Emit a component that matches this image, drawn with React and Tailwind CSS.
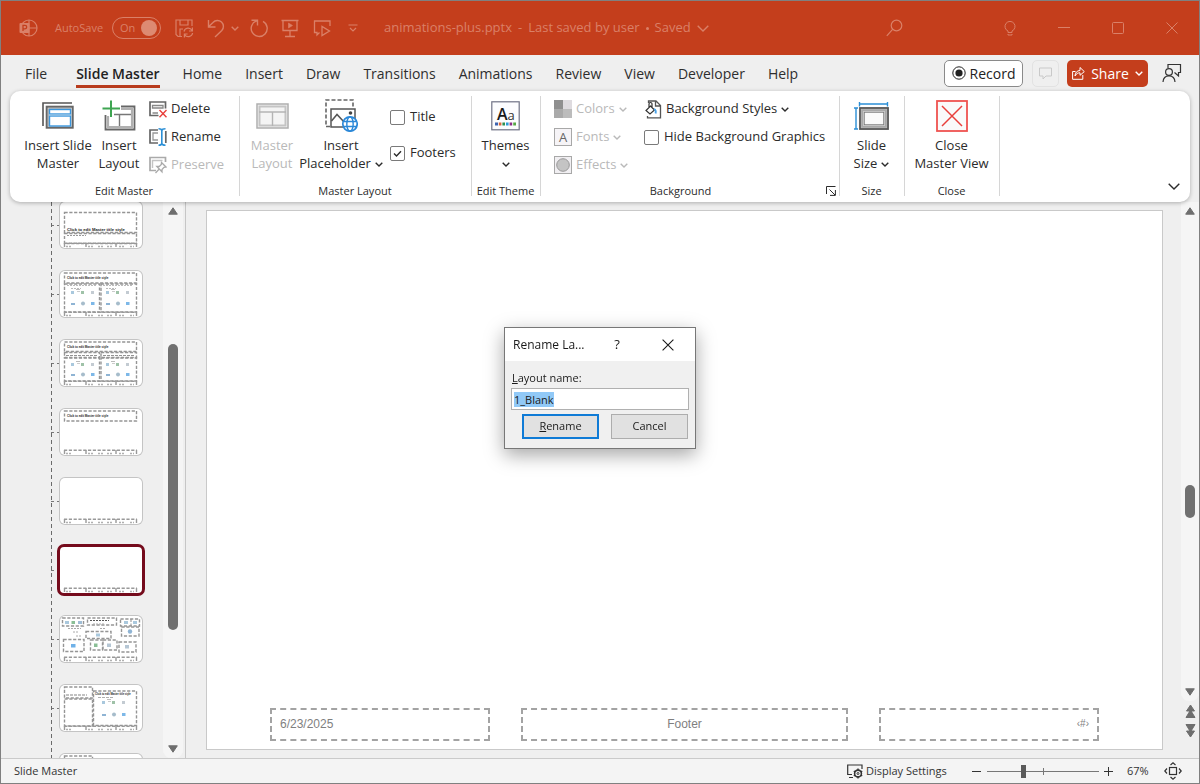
import React, { useEffect, useRef, useState } from "react";

const TABS = [
  "File",
  "Slide Master",
  "Home",
  "Insert",
  "Draw",
  "Transitions",
  "Animations",
  "Review",
  "View",
  "Developer",
  "Help"
];

function Svg({ w, h, className = "", children }) {
  return (
    <svg
      width={w}
      height={h}
      viewBox={`0 0 ${w} ${h}`}
      fill="none"
      stroke="currentColor"
      className={`shrink-0 ${className}`}
      aria-hidden="true"
    >
      {children}
    </svg>
  );
}

function Chevron({ w = 8, h = 5, className = "" }) {
  return (
    <Svg w={w} h={h} className={className}>
      <path d={`M0.7 0.7L${w / 2} ${h - 1}L${w - 0.7} 0.7`} strokeWidth="1.4" />
    </Svg>
  );
}

/* ---------- title bar ---------- */

function TitleBar() {
  return (
    <header className="flex h-[54px] shrink-0 items-center bg-[#c43e1c] pl-[18px] text-[#da8068]">
      <Svg w={19} h={20}>
        <circle cx="10" cy="10" r="8" strokeWidth="1.2" />
        <path d="M10 2V18M10 10H18" strokeWidth="1.2" />
        <rect x="0.5" y="5" width="10" height="10" rx="1" fill="currentColor" stroke="none" />
        <path d="M4 13V7.4H6A1.7 1.7 0 0 1 6 10.8H4" stroke="#c43e1c" strokeWidth="1.3" />
      </Svg>
      <label htmlFor="autosave" className="ml-[17px] w-[57px] text-[11px]">AutoSave</label>
      <button
        id="autosave"
        role="switch"
        aria-checked="true"
        className="flex h-[22px] w-[49px] items-center justify-between rounded-full border border-[#da8068] pr-[3px] pl-[7px] text-[11px]"
      >
        On
        <span className="size-4 rounded-full bg-[#dd8a72]" />
      </button>
      <button aria-label="Save" className="ml-[14px]">
        <Svg w={19} h={19}>
          <path d="M7 17.5H3L1 15.5V1H17V7M5 1V6H13V1M5 17V10H8" strokeWidth="1.2" />
          <path d="M9 12.5A4.3 4.3 0 0 1 17 11.5M17.4 8.5V12H14M17.6 14A4.3 4.3 0 0 1 9.6 15.5M9.4 18.4V15H12.6" strokeWidth="1.2" />
        </Svg>
      </button>
      <button aria-label="Undo" className="ml-[13px]">
        <Svg w={18} h={19}>
          <path d="M1.5 1V8H8.5M1.8 7.6L6 3.4A6 6 0 0 1 14.8 11.6L8 18" strokeWidth="1.4" />
        </Svg>
      </button>
      <button aria-label="Undo history" className="ml-[6px]">
        <Chevron w={8} h={5} />
      </button>
      <button aria-label="Redo" className="ml-[10px]">
        <Svg w={20} h={19}>
          <path d="M8.5 6.5V1.2H2.5M7.8 1.8A8 8 0 1 0 14 2.4" strokeWidth="1.4" />
        </Svg>
      </button>
      <button aria-label="Start from beginning" className="ml-3">
        <Svg w={18} h={19}>
          <path d="M0.5 1.5H17.5M2 1.5V11.5H16V1.5M9 11.5V17.5M4 17.5H14" strokeWidth="1.3" />
          <path d="M7.5 4L11.5 6.5L7.5 9Z" fill="currentColor" strokeWidth="0.6" />
        </Svg>
      </button>
      <button aria-label="Comment" className="ml-[14px]">
        <Svg w={19} h={19}>
          <path d="M6.5 13.5L4 16V13.5H1.5V2H17V7" strokeWidth="1.3" />
          <path d="M9 7.5V16.5L16.5 12Z" strokeWidth="1.3" />
        </Svg>
      </button>
      <button aria-label="Customize toolbar" className="ml-4">
        <Svg w={10} h={9}>
          <path d="M0.5 1H9.5M2 4L5 7L8 4" strokeWidth="1.2" />
        </Svg>
      </button>
      <button className="ml-[26px] flex items-center gap-[6px] text-[13px] whitespace-nowrap">
        <span>animations-plus.pptx</span>
        <span>-</span>
        <span>Last saved by user</span>
        <span className="size-[3px] rounded-full bg-[#da8068]" />
        <span>Saved</span>
        <Chevron w={12} h={7} />
      </button>

      <button aria-label="Search" className="mr-20 ml-auto">
        <Svg w={17} h={18}>
          <circle cx="10.5" cy="6.5" r="5.3" strokeWidth="1.2" />
          <path d="M6.6 10.4L0.8 16.8" strokeWidth="1.2" />
        </Svg>
      </button>
      <button aria-label="Tips" className="flex w-[54px] justify-center">
        <Svg w={12} h={17}>
          <path d="M4 12.5V11A5 5 0 1 1 8 11V12.5ZM4 14V15H8V14" strokeWidth="1" />
        </Svg>
      </button>
      <button aria-label="Minimize" className="flex w-[54px] justify-center">
        <Svg w={12} h={12}>
          <path d="M0 5.5H12" />
        </Svg>
      </button>
      <button aria-label="Maximize" className="flex w-[54px] justify-center">
        <Svg w={12} h={12}>
          <rect x="0.5" y="0.5" width="11" height="11" rx="1" />
        </Svg>
      </button>
      <button aria-label="Close" className="flex w-[54px] justify-center">
        <Svg w={12} h={12}>
          <path d="M0.5 0.5L11.5 11.5M11.5 0.5L0.5 11.5" />
        </Svg>
      </button>
    </header>
  );
}

/* ---------- tabs ---------- */

function TabRow({ active, onChange }) {
  return (
    <div className="flex h-9 shrink-0 items-center">
      <nav className="flex gap-[23px] pl-6 text-[14px] whitespace-nowrap">
        {TABS.map((tab) => (
          <button
            key={tab}
            onClick={() => onChange(tab)}
            className={
              tab === active
                ? "ml-[6px] h-[30px] border-b-[3px] border-[#b83b1d] pt-[3px] font-semibold text-[#222]"
                : "h-[30px] border-b-[3px] border-transparent pt-[3px] text-[#2e2e2e]"
            }
          >
            {tab}
          </button>
        ))}
      </nav>
      <div className="ml-auto flex items-center pr-[17px] text-[14px]">
        <button className="flex h-[27px] w-[79px] items-center justify-center gap-1 rounded-[5px] border border-[#8a8a8a] bg-white text-[#222]">
          <Svg w={14} h={14}>
            <circle cx="7" cy="7" r="6.2" />
            <circle cx="7" cy="7" r="3.6" fill="currentColor" stroke="none" />
          </Svg>
          Record
        </button>
        <button
          aria-label="Comments"
          className="ml-[9px] flex h-[27px] w-[27px] items-center justify-center rounded-[5px] border border-[#e2e2e2] text-[#c9c9c9]"
        >
          <Svg w={13} h={13}>
            <path d="M0.5 1H12.5V9H7L4 12V9H0.5Z" />
          </Svg>
        </button>
        <button className="ml-2 flex h-[27px] w-[81px] items-center justify-center gap-[6px] rounded-[5px] bg-[#c43e1c] text-white">
          <Svg w={13} h={14}>
            <path d="M3.5 5.5H0.6V13.3H10.8V9" />
            <path d="M3 10C3.2 6.5 5 4.6 8 4.5V1.5L12.3 5.6L8 9.3V6.8C5.8 6.8 4.4 7.6 3 10Z" />
          </Svg>
          Share
          <Chevron w={8} h={5} />
        </button>
        <button aria-label="Presence" className="ml-[14px] text-[#333]">
          <Svg w={20} h={20}>
            <path d="M6 5V1.5H18.5V9.5H16.5V13L12.5 9.5" strokeWidth="1.2" />
            <circle cx="7" cy="9" r="3.4" strokeWidth="1.2" />
            <path d="M1 19C1.2 15 3.5 12.8 7 12.8S12.8 15 13 19" strokeWidth="1.2" />
          </Svg>
        </button>
      </div>
    </div>
  );
}

/* ---------- ribbon ---------- */

function Group({ label, className = "", corner, children }) {
  return (
    <section className={`relative flex shrink-0 flex-col pr-[2px] ${className}`}>
      <div className="flex flex-1 pt-[3px]">{children}</div>
      <div className={`h-[21px] text-center text-[11px] leading-5 whitespace-nowrap ${corner ? "pr-[18px]" : ""}`}>{label}</div>
      {corner}
      <span className="absolute top-[5px] right-0 bottom-[6px] w-px bg-[#d6d6d6]" />
    </section>
  );
}

function BigButton({ icon, lines, chevron, disabled, className = "" }) {
  return (
    <button
      disabled={disabled}
      className={`flex flex-col items-center gap-1 pt-[6px] text-[13px] leading-[18px] whitespace-nowrap disabled:text-[#b9b9b9] ${className}`}
    >
      <span className="flex h-8 items-center">{icon}</span>
      <span>
        {lines[0]}
        <br />
        {lines[1]}
        {chevron ? <Chevron className={lines[1] ? "ml-1 inline-block align-middle" : "inline-block align-middle"} /> : null}
      </span>
    </button>
  );
}

function SmallButton({ icon, label, chevron, disabled }) {
  return (
    <button disabled={disabled} className="flex h-7 items-center gap-1 text-[13px] whitespace-nowrap disabled:text-[#b9b9b9]">
      <span className="flex w-[18px] justify-center">{icon}</span>
      {label}
      {chevron ? <Chevron /> : null}
    </button>
  );
}

function CheckBox({ id, label, checked, onChange }) {
  return (
    <div className="flex h-7 items-center gap-[5px] text-[13px] whitespace-nowrap">
      <span className="relative flex size-[15px]">
        <input
          id={id}
          type="checkbox"
          checked={checked}
          onChange={(e) => onChange(e.target.checked)}
          className="peer size-[15px] appearance-none rounded-[2px] border border-[#7a7a7a] bg-white"
        />
        <Svg w={15} h={15} className="pointer-events-none absolute inset-0 hidden peer-checked:block">
          <path d="M4 7.5L6.5 10L11 5.2" strokeWidth="1.4" />
        </Svg>
      </span>
      <label htmlFor={id}>{label}</label>
    </div>
  );
}

const InsertMasterIcon = (
  <Svg w={32} h={28}>
    <path d="M1 24V1H30" stroke="#555" strokeWidth="1.6" />
    <rect x="4.7" y="4.7" width="26" height="21" fill="#f5f5f5" stroke="#666" strokeWidth="2" />
    <rect x="6.7" y="6.7" width="22" height="17" stroke="#aaa" />
    <rect x="7.5" y="7.5" width="21" height="4.5" fill="#fff" stroke="#3a96dd" strokeWidth="1.4" />
    <rect x="7.5" y="14" width="21" height="10" fill="#fff" stroke="#3a96dd" strokeWidth="1.4" />
    <path d="M7 13H29" stroke="#83bbe5" strokeWidth="2" />
  </Svg>
);

const InsertLayoutIcon = (
  <Svg w={34} h={32}>
    <path d="M19 6.5H32.5V29.5H3.5V15" stroke="#666" strokeWidth="1.8" />
    <path d="M19 9H30V27H6V16" stroke="#b0b0b0" strokeWidth="2.2" />
    <path d="M12 14.5H29M17.5 14.5V26" stroke="#777" strokeWidth="1.4" />
    <path d="M9 0.5V17M0.5 8.5H18" stroke="#3fa552" strokeWidth="2" />
  </Svg>
);

const MasterLayoutIcon = (
  <Svg w={33} h={26}>
    <rect x="1" y="1" width="31" height="24" fill="#f4f4f4" stroke="#aeaeae" strokeWidth="1.5" />
    <rect x="3.5" y="3.5" width="26" height="19" stroke="#c4c4c4" strokeWidth="2" />
    <path d="M3 9H30M16.5 9V23" stroke="#b4b4b4" strokeWidth="1.4" />
  </Svg>
);

const PlaceholderIcon = (
  <Svg w={33} h={34}>
    <path d="M5 27.5H1V1H28V8" stroke="#666" strokeWidth="1.6" strokeDasharray="4 2" />
    <rect x="6" y="10" width="24" height="18" fill="#fff" stroke="#555" strokeWidth="1.5" />
    <path d="M6.5 22L12 15.5L20 24" stroke="#555" strokeWidth="1.5" />
    <circle cx="25.5" cy="14" r="1.8" fill="#444" stroke="none" />
    <circle cx="25" cy="25" r="7.2" fill="#fff" stroke="#2b88d8" strokeWidth="1.7" />
    <ellipse cx="25" cy="25" rx="3.2" ry="7.2" stroke="#2b88d8" strokeWidth="1.4" />
    <path d="M18.5 22.5H31.5M18.5 27.5H31.5" stroke="#2b88d8" strokeWidth="1.4" />
  </Svg>
);

const ThemesIcon = (
  <Svg w={29} h={30}>
    <rect x="0.8" y="0.8" width="27.4" height="28" fill="#fcfcfe" stroke="#6f7285" strokeWidth="1.2" />
    <text x="6" y="19" fontSize="16" fontFamily="Open Sans" fontWeight="600" fill="#1a1a1a" stroke="none">A</text>
    <text x="16.5" y="19" fontSize="13" fontFamily="Open Sans" fill="#333" stroke="none">a</text>
    <g strokeWidth="3">
      <path d="M4 23H7" stroke="#3c63b0" />
      <path d="M7.8 23H10.4" stroke="#d9643a" />
      <path d="M11.4 23H14" stroke="#2f8f4e" />
      <path d="M15 23H17.6" stroke="#2b9bd8" />
      <path d="M18.6 23H21.2" stroke="#8a2b86" />
      <path d="M22.2 23H25" stroke="#55a845" />
    </g>
  </Svg>
);

const SlideSizeIcon = (
  <Svg w={35} h={30}>
    <rect x="6" y="7" width="28" height="21" fill="#fafafa" stroke="#555" strokeWidth="1.8" />
    <rect x="8.2" y="9.2" width="23.6" height="16.6" stroke="#a8a8a8" strokeWidth="2.2" />
    <rect x="10.2" y="11.2" width="19.6" height="12.6" stroke="#777" />
    <path d="M5.5 3H33.5M5.5 1V5.5M33.5 1V5.5M2 7V28M0 7H4M0 28H4" stroke="#2b8fd6" strokeWidth="1.4" />
  </Svg>
);

const CloseMasterIcon = (
  <Svg w={32} h={32}>
    <rect x="1" y="1" width="30" height="30" fill="#fafafa" stroke="#ef5350" strokeWidth="1.8" />
    <path d="M6 6L26 26M26 6L6 26" stroke="#e8403c" strokeWidth="1.5" />
  </Svg>
);

const DeleteIcon = (
  <Svg w={18} h={17}>
    <path d="M9.5 14.5H1V1H16.5V7.5" stroke="#666" strokeWidth="1.7" />
    <path d="M3.5 4.5H14V7H3.5ZM3.5 12H9" stroke="#888" strokeWidth="1.3" />
    <path d="M10.5 9L17.5 16.3M17.5 9L10.5 16.3" stroke="#e8403c" strokeWidth="1.4" />
  </Svg>
);

const RenameIcon = (
  <Svg w={18} h={18}>
    <path d="M9 15H1V2H9M16.8 3V15" stroke="#666" strokeWidth="1.7" />
    <path d="M9 12H4V5H9" stroke="#999" strokeWidth="1.3" />
    <path d="M9.5 0.8Q12.5 0.8 12.8 2.5Q13.1 0.8 16.5 0.8M12.8 2.5V15.5M9.5 17.2Q12.5 17.2 12.8 15.5Q13.1 17.2 16.5 17.2" stroke="#2b8fd6" strokeWidth="1.6" />
  </Svg>
);

const PreserveIcon = (
  <Svg w={18} h={18}>
    <path d="M7 14.5H1V1.5H16.5V6" stroke="#aaa" strokeWidth="1.7" />
    <path d="M3.5 12V4.5H13.5" stroke="#c4c4c4" strokeWidth="1.4" />
    <path d="M12.5 6.5L17 11L15 11.3L13 13.5V15.8L7.8 10.5H10.2L12.3 8.5ZM10 13.2L6.5 17" stroke="#aaa" strokeWidth="1.3" />
  </Svg>
);

const ColorsIcon = (
  <Svg w={18} h={18}>
    <g stroke="none">
      <rect width="9" height="9" fill="#8f8f8f" />
      <rect x="9" width="9" height="9" fill="#dedbdf" />
      <rect y="9" width="9" height="9" fill="#aaa" />
      <rect x="9" y="9" width="9" height="9" fill="#bcbcbc" />
    </g>
  </Svg>
);

const FontsIcon = (
  <Svg w={18} h={18}>
    <rect x="0.5" y="0.5" width="17" height="17" fill="#f6f4f7" stroke="#a8a8a8" />
    <text x="9" y="14" textAnchor="middle" fontSize="13" fontFamily="Open Sans" fill="#666" stroke="none">A</text>
  </Svg>
);

const EffectsIcon = (
  <Svg w={18} h={18}>
    <rect x="0.5" y="0.5" width="17" height="17" fill="#f1eff2" stroke="#a8a8a8" />
    <circle cx="9" cy="9" r="6.3" fill="#c4c4c4" stroke="#999" />
  </Svg>
);

const BgStylesIcon = (
  <Svg w={17} h={19}>
    <path d="M3.5 3V1H11L15.5 5.5V17.8H2.5V16M10.5 1V6H15.3" stroke="#555" strokeWidth="1.3" />
    <path d="M5.5 6L9.5 10L5 14L1 10.5ZM4 7.5V4A1.5 1.5 0 0 1 7 4V8" stroke="#333" strokeWidth="1.2" />
    <path d="M9 9Q11.5 10 10.6 13.5" stroke="#4aa3e8" strokeWidth="1.8" />
  </Svg>
);

function Ribbon() {
  const [title, setTitle] = useState(false);
  const [footers, setFooters] = useState(true);
  const [hideBg, setHideBg] = useState(false);

  return (
    <div className="relative z-10 mx-[9px] flex h-[111px] shrink-0 rounded-[10px] bg-white text-[#2b2b2b] shadow-[0_1px_4px_rgba(0,0,0,0.28)]">
      <Group label="Edit Master" className="w-[230px]">
        <BigButton icon={InsertMasterIcon} lines={["Insert Slide", "Master"]} className="ml-[13px] w-[70px]" />
        <BigButton icon={InsertLayoutIcon} lines={["Insert", "Layout"]} className="ml-1 w-11" />
        <div className="ml-2 pt-px">
          <SmallButton icon={DeleteIcon} label="Delete" />
          <SmallButton icon={RenameIcon} label="Rename" />
          <SmallButton icon={PreserveIcon} label="Preserve" disabled />
        </div>
      </Group>

      <Group label="Master Layout" className="w-[232px]">
        <BigButton icon={MasterLayoutIcon} lines={["Master", "Layout"]} disabled className="ml-[10px] w-11" />
        <BigButton icon={PlaceholderIcon} lines={["Insert", "Placeholder"]} chevron className="ml-[5px] w-[84px]" />
        <div className="ml-[7px] flex flex-col gap-2 pt-[9px]">
          <CheckBox id="show-title" label="Title" checked={title} onChange={setTitle} />
          <CheckBox id="show-footers" label="Footers" checked={footers} onChange={setFooters} />
        </div>
      </Group>

      <Group label="Edit Theme" className="w-[69px]">
        <BigButton icon={ThemesIcon} lines={["Themes", ""]} chevron className="w-full" />
      </Group>

      <Group
        label="Background"
        className="w-[299px]"
        corner={
          <button aria-label="Background options" className="absolute right-1 bottom-[6px]">
            <Svg w={10} h={10}>
              <path d="M0.5 8V0.5H9.5M3.5 3.5L9 9M9.4 4V9.4H4" />
            </Svg>
          </button>
        }
      >
        <div className="ml-[13px] w-[90px] pt-px">
          <SmallButton icon={ColorsIcon} label="Colors" chevron disabled />
          <SmallButton icon={FontsIcon} label="Fonts" chevron disabled />
          <SmallButton icon={EffectsIcon} label="Effects" chevron disabled />
        </div>
        <div className="pt-px">
          <SmallButton icon={BgStylesIcon} label="Background Styles" chevron />
          <CheckBox id="hide-bg" label="Hide Background Graphics" checked={hideBg} onChange={setHideBg} />
        </div>
      </Group>

      <Group label="Size" className="w-[65px]">
        <BigButton icon={SlideSizeIcon} lines={["Slide", "Size"]} chevron className="w-full" />
      </Group>

      <Group label="Close" className="w-[95px]">
        <BigButton icon={CloseMasterIcon} lines={["Close", "Master View"]} className="w-full" />
      </Group>

      <button aria-label="Collapse ribbon" className="mr-[10px] mb-3 ml-auto self-end">
        <Chevron w={12} h={7} />
      </button>
    </div>
  );
}

/* ---------- thumbnails ---------- */

function Dash({ x, y, w, h }) {
  return <rect x={x} y={y} width={w} height={h} stroke="#959595" strokeWidth="1.4" strokeDasharray="3.2 1.6" />;
}

function FooterMarks() {
  return (
    <g stroke="#999" strokeWidth="1.4">
      <path d="M4 41.2H77" strokeDasharray="3.2 1.6" />
      <path d="M4.5 41V45M26 41V45M56 41V45M76.5 41V45" />
      <path d="M6 44.5H11M28 44.5H33M38 44.5H44M47 44.5H52M59 44.5H64M70 44.5H74" strokeDasharray="2 1" stroke="#b0b0b0" />
    </g>
  );
}

function TitleLine({ x = 7, y = 7.5, size = 3 }) {
  return (
    <text x={x} y={y} fontSize={size} fontFamily="Liberation Sans" fontWeight="600" fill="#222" stroke="none">
      Click to edit Master title style
    </text>
  );
}

// the six "insert content" glyphs that fill an empty content box
function ContentIcons({ x, y, rowGap = 11 }) {
  return (
    <g stroke="none">
      <rect x={x} y={y} width="3" height="3" fill="#a9c8dd" />
      <rect x={x + 5} y={y - 2} width="4" height="1" fill="#bbb" />
      <rect x={x + 6} y={y} width="3" height="1" fill="#ccc" />
      <rect x={x + 10} y={y} width="3" height="3" fill="#9fc2a8" />
      <rect x={x + 20} y={y} width="3" height="3" fill="#c3cbd2" />
      <rect x={x} y={y + rowGap + 1} width="4" height="2" fill="#8fb4d4" />
      <circle cx={x + 12} cy={y + rowGap + 1.5} r="2" fill="#a6bccb" />
      <rect x={x + 20} y={y + rowGap} width="3.5" height="3" fill="#7db8e8" />
    </g>
  );
}

const THUMBS = [
  {
    id: "section",
    art: (
      <>
        <Dash x={4.5} y={10.5} w={72} h={20} />
        <Dash x={4.5} y={31.5} w={72} h={10} />
        <TitleLine y={28.5} size={4.2} />
        <path d="M7 33.5H26" stroke="#999" strokeDasharray="2 1" />
      </>
    )
  },
  {
    id: "two-content",
    art: (
      <>
        <Dash x={4.5} y={2} w={72} h={10} />
        <Dash x={4.5} y={13} w={35} h={28} />
        <Dash x={41} y={13} w={35.5} h={28} />
        <TitleLine />
        <path d="M7 14.5H36M43 14.5H72M11 17.5H21M46 17.5H56" stroke="#aaa" strokeWidth="0.8" strokeDasharray="2 1" />
        <ContentIcons x={11} y={20} />
        <ContentIcons x={46} y={20} />
      </>
    )
  },
  {
    id: "comparison",
    art: (
      <>
        <Dash x={4.5} y={2} w={72} h={9.5} />
        <Dash x={4.5} y={12.5} w={35} h={5} />
        <Dash x={41} y={12.5} w={35.5} h={5} />
        <Dash x={4.5} y={18} w={35} h={23} />
        <Dash x={41} y={18} w={35.5} h={23} />
        <TitleLine />
        <path d="M6 15.5H37M43 15.5H75" stroke="#777" strokeWidth="0.8" strokeDasharray="3 1" />
        <ContentIcons x={11} y={23} rowGap={10} />
        <ContentIcons x={46} y={23} rowGap={10} />
      </>
    )
  },
  {
    id: "title-only",
    art: (
      <>
        <Dash x={4.5} y={2} w={72} h={10} />
        <TitleLine />
      </>
    )
  },
  { id: "blank", art: null },
  { id: "1-blank", art: null },
  {
    id: "custom",
    art: (
      <>
        <Dash x={2.5} y={2} w={21} h={8} />
        <Dash x={27.5} y={2} w={29} h={7} />
        <Dash x={60.5} y={3} w={19} h={7} />
        <path d="M71 3V10" stroke="#8f8f8f" strokeDasharray="3 1.5" />
        <Dash x={61.5} y={11} w={17.5} h={9} />
        <Dash x={26} y={15.5} w={25} h={7} />
        <Dash x={3.5} y={23.5} w={20.5} h={12} />
        <Dash x={30.5} y={24} w={12} h={10} />
        <Dash x={43} y={24} w={14} h={10} />
        <Dash x={59} y={26} w={17} h={10} />
        <path d="M30 4.5H49" stroke="#555" strokeDasharray="2 1" />
        <path d="M33 8H44M40 12.5H46M8 12.5H21M13 16H18M16 20H21" stroke="#aaa" strokeDasharray="2 1" />
        <g stroke="none">
          <rect x="5" y="5" width="4" height="3" fill="#a9c8dd" />
          <rect x="11.5" y="5" width="3.5" height="3" fill="#8abf96" />
          <rect x="18" y="5" width="4" height="3" fill="#9fbdd6" />
          <rect x="64" y="5" width="4" height="3" fill="#a9c8dd" />
          <rect x="73" y="5" width="4" height="3" fill="#a9c8dd" />
          <circle cx="70" cy="15.5" r="2.2" fill="#8fb4d4" />
          <rect x="36" y="17.5" width="4" height="3" fill="#a9c8dd" />
          <rect x="11" y="28" width="4.5" height="3.5" fill="#6fb1e8" />
          <rect x="34" y="27.5" width="3.5" height="3.5" fill="#8abf96" />
          <rect x="47" y="27.5" width="4" height="3.5" fill="#b5c6d4" />
          <rect x="65" y="29" width="4" height="3.5" fill="#b5c6d4" />
        </g>
      </>
    )
  },
  {
    id: "content-caption",
    art: (
      <>
        <Dash x={4.5} y={2} w={28} h={11} />
        <Dash x={4.5} y={14} w={28} h={27} />
        <Dash x={33.5} y={6} w={43} h={34.5} />
        <TitleLine x={35} y={10} size={2.6} />
        <path d="M6 10H27" stroke="#666" strokeWidth="0.8" strokeDasharray="3 1" />
        <path d="M38 12.5H53" stroke="#999" strokeWidth="0.8" strokeDasharray="3 1" />
        <ContentIcons x={42} y={16} rowGap={12} />
      </>
    )
  },
  { id: "picture-caption", art: <Dash x={4.5} y={2} w={28} h={12} /> }
];

function Arrow({ down }) {
  return (
    <Svg w={10} h={8} className={down ? "rotate-180" : ""}>
      <path d="M5 0.8L9.3 7.2H0.7Z" fill="#6e6e6e" stroke="#6e6e6e" strokeLinejoin="round" />
    </Svg>
  );
}

function DoubleArrow({ down }) {
  return (
    <Svg w={11} h={15} className={down ? "rotate-180" : ""}>
      <path d="M5.5 1L9.5 7H1.5ZM5.5 6L10 13.5H1Z" fill="#6e6e6e" stroke="#6e6e6e" strokeLinejoin="round" />
    </Svg>
  );
}

function LayoutPanel() {
  const [selected, setSelected] = useState("1-blank");
  return (
    <aside className="flex w-[185px] shrink-0 overflow-hidden border-r border-[#c6c6c6]">
      <div className="relative ml-[50px] flex flex-1 flex-col gap-[23px] overflow-hidden">
        <span className="absolute inset-y-0 left-0 w-px bg-[repeating-linear-gradient(to_bottom,#6b6b6b_0_4px,transparent_4px_7px)]" />
        {THUMBS.map((thumb) => (
          <div key={thumb.id} className="flex shrink-0 items-center">
            <span className="w-[9px] border-t border-dashed border-[#777]" />
            <button
              aria-label={thumb.id}
              onClick={() => setSelected(thumb.id)}
              className={
                thumb.id === selected
                  ? "h-[46px] w-[82px] overflow-hidden rounded-[4px] bg-white outline-3 outline-[#750b1c]"
                  : "h-[46px] w-[82px] overflow-hidden rounded-[5px] bg-white ring-1 ring-[#c4c4c4]"
              }
            >
              <Svg w={82} h={46}>
                {thumb.art}
                <FooterMarks />
              </Svg>
            </button>
          </div>
        ))}
      </div>
      <div className="mr-[2px] flex w-[20px] flex-col items-center rounded-b-lg bg-[#f5f5f5] pt-[5px] pb-[5px]">
        <Arrow />
        <div className="flex w-full flex-1 flex-col items-center">
          <span className="flex-129" />
          <span className="w-[10px] flex-286 rounded-full bg-[#707070]" />
          <span className="flex-115" />
        </div>
        <Arrow down />
      </div>
    </aside>
  );
}

/* ---------- slide ---------- */

function SlideCanvas() {
  return (
    <main className="flex min-w-0 flex-1 pt-2 pb-2 pl-5">
      <div className="flex flex-1 flex-col justify-end border border-[#c9c9c9] bg-white px-[63px] pb-2">
        <div className="grid grid-cols-[220fr_327fr_220fr] gap-[31px] font-['Liberation_Sans',sans-serif] text-[12px] leading-7 text-[#7f7f7f]">
          <div className="h-[33px] border-2 border-dashed border-[#a3a3a3] px-2">6/23/2025</div>
          <div className="h-[33px] border-2 border-dashed border-[#a3a3a3] px-2 text-center">Footer</div>
          <div className="h-[33px] border-2 border-dashed border-[#a3a3a3] px-2 text-right text-[10px]">‹#›</div>
        </div>
      </div>
    </main>
  );
}

function SlideScroll() {
  return (
    <div className="ml-[18px] flex w-[18px] shrink-0 flex-col items-center">
      <div className="flex w-full flex-1 flex-col items-center rounded-b-lg bg-[#f5f5f5] pt-[5px] pb-[5px]">
        <Arrow />
        <div className="flex w-full flex-1 flex-col items-center">
          <span className="flex-270" />
          <span className="w-[10px] flex-33 rounded-full bg-[#707070]" />
          <span className="flex-170" />
        </div>
        <Arrow down />
      </div>
      <div className="flex flex-col gap-1 pt-[3px] pb-5">
        <DoubleArrow />
        <DoubleArrow down />
      </div>
    </div>
  );
}

/* ---------- rename dialog ---------- */

function RenameDialog() {
  const [name, setName] = useState("1_Blank");
  const inputRef = useRef(null);

  useEffect(() => {
    inputRef.current.focus();
    inputRef.current.select();
  }, []);

  return (
    <div className="pointer-events-none fixed inset-0 z-20 flex items-start justify-center pt-[327px]">
      <div
        role="dialog"
        aria-label="Rename Layout"
        className="pointer-events-auto w-48 border border-[#777] bg-[#f0f0f0] text-[11px] text-[#1a1a1a] shadow-[0_6px_18px_rgba(0,0,0,0.35)]"
      >
        <div className="flex h-[33px] items-center bg-white pl-2 text-[12px]">
          <span className="w-[100px]">Rename La...</span>
          <button className="w-2 text-[13px]">?</button>
          <button aria-label="Close dialog" className="ml-[41px]">
            <Svg w={12} h={12}>
              <path d="M0.6 0.6L11.4 11.4M11.4 0.6L0.6 11.4" strokeWidth="1.1" />
            </Svg>
          </button>
        </div>
        <form className="px-[6px] pt-[7px] pb-[9px]" onSubmit={(e) => e.preventDefault()}>
          <label htmlFor="layout-name" className="block h-5 pl-px leading-5">
            <u>L</u>ayout name:
          </label>
          <input
            id="layout-name"
            ref={inputRef}
            value={name}
            onChange={(e) => setName(e.target.value)}
            className="block h-[22px] w-full border border-[#b0b0b0] bg-white px-[2px] outline-none selection:bg-[#91c9f7] selection:text-[#1a1a1a]"
          />
          <div className="mt-1 flex justify-end gap-3 pr-px">
            <button type="submit" className="h-[25px] w-[77px] border-2 border-[#0f7bd6] bg-[#e1e1e1]">
              <u>R</u>ename
            </button>
            <button type="button" className="h-[25px] w-[77px] border border-[#adadad] bg-[#e1e1e1]">Cancel</button>
          </div>
        </form>
      </div>
    </div>
  );
}

/* ---------- status bar ---------- */

function StatusBar() {
  const [zoom, setZoom] = useState(32);
  return (
    <footer className="flex h-[25px] shrink-0 items-center border-t border-[#cacaca] bg-[#f4f4f4] pr-[17px] pl-[13px] text-[11px] text-[#333]">
      <span>Slide Master</span>
      <button className="ml-auto flex items-center gap-[3px]">
        <Svg w={16} h={15}>
          <path d="M5 10.5H0.7V1H15V5M2 13.5H6" strokeWidth="1.2" />
          <circle cx="11" cy="9.5" r="3.4" strokeWidth="1.6" />
          <circle cx="11" cy="9.5" r="1" />
          <path d="M11 4.6V6M11 13V14.4M6.8 7L8 7.8M14 11.2L15.2 12M6.8 12L8 11.2M14 7.8L15.2 7" strokeWidth="1.4" />
        </Svg>
        <span className="w-[85px] text-left whitespace-nowrap">Display Settings</span>
      </button>
      <button aria-label="Zoom out" className="ml-[21px]">
        <Svg w={9} h={9}>
          <path d="M0 4.5H9" />
        </Svg>
      </button>
      <span className="relative ml-[6px] flex h-4 w-28 items-center">
        <span className="absolute left-1/2 h-[7px] w-px bg-[#777]" />
        <input
          type="range"
          aria-label="Zoom"
          min="0"
          max="100"
          value={zoom}
          onChange={(e) => setZoom(Number(e.target.value))}
          className="relative h-px w-full appearance-none bg-[#777] [&::-webkit-slider-thumb]:h-[13px] [&::-webkit-slider-thumb]:w-[5px] [&::-webkit-slider-thumb]:appearance-none [&::-webkit-slider-thumb]:bg-[#5a5a5a]"
        />
      </span>
      <button aria-label="Zoom in" className="ml-[5px]">
        <Svg w={9} h={9}>
          <path d="M0 4.5H9M4.5 0V9" />
        </Svg>
      </button>
      <span className="ml-[14px] w-[37px]">67%</span>
      <button aria-label="Fit slide to window">
        <Svg w={18} h={18}>
          <rect x="5.5" y="5.5" width="7" height="7" strokeWidth="1.2" />
          <path d="M6.5 3L9 0.8L11.5 3M6.5 15L9 17.2L11.5 15M3 6.5L0.8 9L3 11.5M15 6.5L17.2 9L15 11.5" strokeWidth="1.2" />
        </Svg>
      </button>
    </footer>
  );
}

export default function App() {
  const [tab, setTab] = useState("Slide Master");
  return (
    <div className="flex h-screen flex-col overflow-hidden border border-[#808080] bg-[#efefef] font-['Open_Sans','Noto_Sans',sans-serif]">
      <TitleBar />
      <TabRow active={tab} onChange={setTab} />
      <Ribbon />
      <div className="flex min-h-0 flex-1">
        <LayoutPanel />
        <SlideCanvas />
        <SlideScroll />
      </div>
      <StatusBar />
      <RenameDialog />
    </div>
  );
}
